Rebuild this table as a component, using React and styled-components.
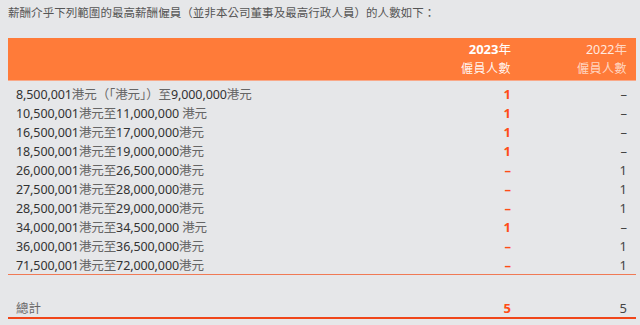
import React from 'react'
import styled, { createGlobalStyle } from 'styled-components'

const rows = [
  { from: '8,500,001', mid: '港元（「港元」）至', to: '9,000,000', end: '港元', a: '1', b: '–' },
  { from: '10,500,001', mid: '港元至', to: '11,000,000', end: ' 港元', a: '1', b: '–' },
  { from: '16,500,001', mid: '港元至', to: '17,000,000', end: '港元', a: '1', b: '–' },
  { from: '18,500,001', mid: '港元至', to: '19,000,000', end: '港元', a: '1', b: '–' },
  { from: '26,000,001', mid: '港元至', to: '26,500,000', end: '港元', a: '–', b: '1' },
  { from: '27,500,001', mid: '港元至', to: '28,000,000', end: '港元', a: '–', b: '1' },
  { from: '28,500,001', mid: '港元至', to: '29,000,000', end: '港元', a: '–', b: '1' },
  { from: '34,000,001', mid: '港元至', to: '34,500,000', end: ' 港元', a: '1', b: '–' },
  { from: '36,000,001', mid: '港元至', to: '36,500,000', end: '港元', a: '–', b: '1' },
  { from: '71,500,001', mid: '港元至', to: '72,000,000', end: '港元', a: '–', b: '1' },
]

const GlobalStyle = createGlobalStyle`
  html, body { margin: 0; padding: 0; background: #e6e7e9; }
  body { font-family: "Noto Sans", "Noto Sans CJK TC", sans-serif; }
`

export default function App() {
  return (
    <Page>
      <GlobalStyle />
      <Intro>薪酬介乎下列範圍的最高薪酬僱員（並非本公司董事及最高行政人員）的人數如下：</Intro>
      <Table>
        <Head>
          <span />
          <HeadCell current>
            <b>2023</b>年
            <small>僱員人數</small>
          </HeadCell>
          <HeadCell>
            2022<i>年</i>
            <small>僱員人數</small>
          </HeadCell>
        </Head>
        <Body>
          {rows.map((r, i) => (
            <Row key={i}>
              <Label>
                <Num>{r.from}</Num>{r.mid}<Num>{r.to}</Num>{r.end}
              </Label>
              <Value current>{r.a}</Value>
              <Value>{r.b}</Value>
            </Row>
          ))}
        </Body>
        <Total>
          <Label>總計</Label>
          <Value current>5</Value>
          <Value>5</Value>
        </Total>
      </Table>
    </Page>
  )
}

const Page = styled.div`
  padding: 6px 4px 0 8px;
`
const Intro = styled.p`
  margin: 0;
  font-size: 11.5px;
  line-height: 14px;
  color: #555;
  letter-spacing: 0.05px;
`
const Table = styled.div`
  margin-top: 18px;
  width: 628px;
`
const Grid = styled.div`
  display: grid;
  grid-template-columns: 1fr 100px 116px;
  padding: 0 9px 0 8px;
  align-items: center;
`
const Head = styled(Grid)`
  height: 42px;
  background: #ff7b39;
  border-bottom: 1px solid #f9a989;
`
const HeadCell = styled.div`
  text-align: right;
  color: ${p => (p.current ? '#fff' : 'rgba(255,255,255,0.85)')};
  font-size: 12.5px;
  line-height: 19px;
  b { font-weight: 700; font-size: 13px; }
  i { font-style: normal; color: rgba(255,255,255,0.7); }
  small {
    display: block;
    font-size: 12px;
    letter-spacing: 0.5px;
    color: ${p => (p.current ? 'rgba(255,255,255,0.95)' : 'rgba(255,255,255,0.7)')};
  }
`
const Body = styled.div`
  padding-top: 3px;
  border-bottom: 1px solid #f07a55;
`
const Row = styled(Grid)`
  height: 19px;
`
const Label = styled.div`
  font-size: 12.5px;
  color: #666;
  white-space: pre;
  letter-spacing: -0.1px;
`
const Num = styled.span`
  color: #333;
`
const Value = styled.div`
  text-align: right;
  font-size: 13px;
  color: ${p => (p.current ? '#ff4d17' : '#444')};
  font-weight: ${p => (p.current ? 700 : 400)};
`
const Total = styled(Grid)`
  height: 19px;
  margin-top: 23px;
  border-bottom: 2px solid #f0461a;
`
